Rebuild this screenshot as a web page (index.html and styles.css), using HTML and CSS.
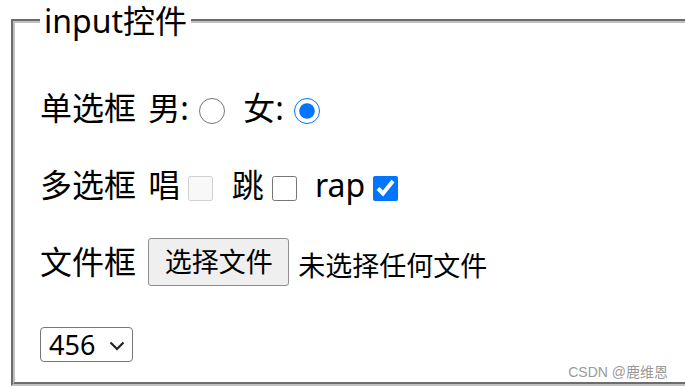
FILE: index.html
```html
<!DOCTYPE html>
<html lang="zh">
<head>
    <meta charset="UTF-8">
    <title>input控件</title>
    <link rel="stylesheet" href="styles.css">
</head>
<body>
<fieldset class="panel">
    <legend>input控件</legend>
    <div class="row">单选框 男:<input type="radio" name="sex"> 女:<input type="radio" name="sex" checked></div>
    <div class="row">多选框 唱<input type="checkbox" disabled> 跳<input type="checkbox"> rap<input type="checkbox" checked></div>
    <div class="row">文件框 <button class="file-btn">选择文件</button><span class="file-name">未选择任何文件</span></div>
    <div class="select-row">
        <span class="select-box">
            <select>
                <option>456</option>
                <option>123</option>
            </select>
            <svg class="arrow" width="16" height="10" viewBox="0 0 16 10">
                <path d="M1.5 1.5 L8 8 L14.5 1.5" fill="none" stroke="#222" stroke-width="2.2"/>
            </svg>
        </span>
    </div>
</fieldset>
<div class="mark">CSDN @鹿维恩</div>
</body>
</html>
```

FILE: styles.css
```css
html, body {
    overflow: hidden;
}

body {
    margin: 0;
    background-color: white;
    color: black;
    font-family: "Noto Sans", "Noto Sans CJK SC", sans-serif;
    font-size: 32px;
}

fieldset.panel {
    margin: 0 0 0 11px;
    width: 720px;
    border: 4px groove #c0c0c0;
    padding: 27px 0 20px 25px;
}

legend {
    padding: 0 4px;
    line-height: 42px;
}

div.row {
    height: 77px;
    line-height: 77px;
    word-spacing: 4px;
    white-space: nowrap;
}

input[type=radio] {
    width: 26px;
    height: 26px;
    margin: 0 6px 0 10px;
    vertical-align: middle;
}

input[type=checkbox] {
    width: 25px;
    height: 25px;
    margin: 0 6px 0 8px;
    vertical-align: middle;
}

button.file-btn {
    width: 141px;
    height: 48px;
    margin-bottom: 7px;
    padding: 0;
    font-family: inherit;
    font-size: 27px;
    line-height: 44px;
    color: black;
    background-color: #efefef;
    border: 1px solid #8f8f8f;
    border-radius: 3px;
    vertical-align: middle;
    word-spacing: 0;
}

span.file-name {
    margin-left: 9px;
    font-size: 27px;
    word-spacing: 0;
    vertical-align: middle;
}

div.select-row {
    display: flex;
    margin-top: 27px;
    height: 35px;
}

span.select-box {
    position: relative;
    display: block;
    height: 35px;
}

select {
    display: block;
    appearance: none;
    width: 93px;
    height: 35px;
    padding: 0 0 0 8px;
    font-family: inherit;
    font-size: 27px;
    line-height: 33px;
    color: black;
    background-color: white;
    border: 1px solid #767676;
    border-radius: 4px;
}

svg.arrow {
    position: absolute;
    left: 69px;
    top: 14px;
    pointer-events: none;
}

div.mark {
    position: absolute;
    right: 17px;
    bottom: 8px;
    font-family: "Liberation Sans", "Noto Sans CJK SC", sans-serif;
    font-size: 14px;
    color: #9a9a9a;
}
```
